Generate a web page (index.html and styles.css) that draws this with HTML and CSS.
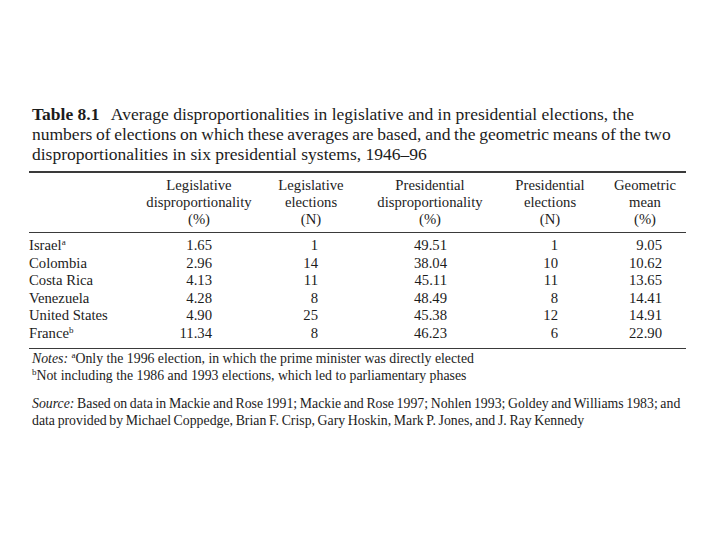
FILE: index.html
```html
<!DOCTYPE html>
<html>
<head>
<meta charset="utf-8">
<link rel="stylesheet" href="styles.css">
</head>
<body>
<div class="page">
  <p class="title"><b class="label">Table 8.1</b> Average disproportionalities in legislative and in presidential elections, the<br><span class="tight">numbers of elections on which these averages are based, and the geometric means of the two</span><br>disproportionalities in six presidential systems, 1946–96</p>
  <table class="data">
    <colgroup>
      <col class="c0"><col class="c1"><col class="c2"><col class="c3"><col class="c4"><col class="c5">
    </colgroup>
    <thead>
      <tr>
        <th></th>
        <th>Legislative<br>disproportionality<br>(%)</th>
        <th>Legislative<br>elections<br>(N)</th>
        <th>Presidential<br>disproportionality<br>(%)</th>
        <th>Presidential<br>elections<br>(N)</th>
        <th>Geometric<br>mean<br>(%)</th>
      </tr>
    </thead>
    <tbody>
      <tr><td class="name">Israel<sup>a</sup></td><td class="n1">1.65</td><td class="n2">1</td><td class="n3">49.51</td><td class="n4">1</td><td class="n5">9.05</td></tr>
      <tr><td class="name">Colombia</td><td class="n1">2.96</td><td class="n2">14</td><td class="n3">38.04</td><td class="n4">10</td><td class="n5">10.62</td></tr>
      <tr><td class="name">Costa Rica</td><td class="n1">4.13</td><td class="n2">11</td><td class="n3">45.11</td><td class="n4">11</td><td class="n5">13.65</td></tr>
      <tr><td class="name">Venezuela</td><td class="n1">4.28</td><td class="n2">8</td><td class="n3">48.49</td><td class="n4">8</td><td class="n5">14.41</td></tr>
      <tr><td class="name">United States</td><td class="n1">4.90</td><td class="n2">25</td><td class="n3">45.38</td><td class="n4">12</td><td class="n5">14.91</td></tr>
      <tr><td class="name">France<sup>b</sup></td><td class="n1">11.34</td><td class="n2">8</td><td class="n3">46.23</td><td class="n4">6</td><td class="n5">22.90</td></tr>
    </tbody>
  </table>
  <div class="notes">
    <p><i>Notes:</i> <sup>a</sup>Only the 1996 election, in which the prime minister was directly elected<br><sup>b</sup>Not including the 1986 and 1993 elections, which led to parliamentary phases</p>
    <p class="source"><i>Source:</i> Based on data in Mackie and Rose 1991; Mackie and Rose 1997; Nohlen 1993; Goldey and Williams 1983; and<br>data provided by Michael Coppedge, Brian F. Crisp, Gary Hoskin, Mark P. Jones, and J. Ray Kennedy</p>
  </div>
</div>
</body>
</html>
```

FILE: styles.css
```css
html, body {
  margin: 0;
  padding: 0;
  background: #ffffff;
}
body {
  width: 720px;
  height: 540px;
  font-family: "Liberation Serif", "DejaVu Serif", serif;
  color: #1c1c1c;
}
.page {
  padding: 104px 20px 0 29px;
}
.title {
  margin: 0 0 0 3px;
  font-size: 17.5px;
  line-height: 20px;
  white-space: nowrap;
}
.title .tight {
  word-spacing: -0.7px;
}
.label {
  margin-right: 8px;
}
.data {
  border-collapse: collapse;
  table-layout: fixed;
  width: 657px;
  margin-top: 7px;
  font-size: 14.7px;
  line-height: 17.6px;
}
.c0 { width: 111px; }
.c1 { width: 118px; }
.c2 { width: 106px; }
.c3 { width: 132px; }
.c4 { width: 108px; }
.c5 { width: 82px; }
.data thead tr {
  border-top: 2px solid #3a3a3a;
  border-bottom: 1.5px solid #3a3a3a;
}
.data th {
  font-weight: normal;
  text-align: center;
  padding: 4px 0 4px;
  line-height: 17px;
}
.data td {
  padding: 0;
  white-space: nowrap;
  text-align: right;
}
.data tbody tr:first-child td { padding-top: 4px; }
.data tbody tr:last-child td { padding-bottom: 5px; }
.data tbody tr:last-child { border-bottom: 1.5px solid #3a3a3a; }
.data td.name { text-align: left; padding-left: 0; }
.n1 { padding-right: 46px !important; }
.n2 { padding-right: 46px !important; }
.n3 { padding-right: 49px !important; }
.n4 { padding-right: 46px !important; }
.n5 { padding-right: 24px !important; }
sup {
  font-size: 9px;
  line-height: 0;
  vertical-align: 5px;
}
.notes {
  margin-left: 3px;
  font-size: 13.8px;
  line-height: 17px;
  padding-top: 1.5px;
  white-space: nowrap;
}
.notes p {
  margin: 0;
}
.notes .source {
  margin-top: 11px;
  word-spacing: -0.8px;
}
```
